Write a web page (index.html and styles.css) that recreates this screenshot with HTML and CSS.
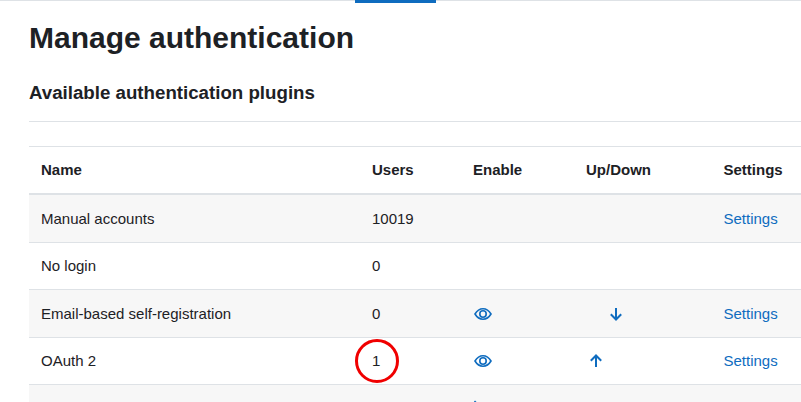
FILE: index.html
```html
<!DOCTYPE html>
<html lang="en">
<head>
<meta charset="utf-8">
<title>Manage authentication</title>
<link rel="stylesheet" href="styles.css">
</head>
<body>
<div class="tabbar"><span class="active-tab"></span></div>
<main class="page">
<h1>Manage authentication</h1>
<h3>Available authentication plugins</h3>
<hr class="rule">
<table class="plugins">
<thead>
<tr><th class="c-name">Name</th><th class="c-users">Users</th><th class="c-enable">Enable</th><th class="c-updown">Up/Down</th><th class="c-settings">Settings</th></tr>
</thead>
<tbody>
<tr class="odd"><td>Manual accounts</td><td>10019</td><td></td><td></td><td><a href="#">Settings</a></td></tr>
<tr><td>No login</td><td>0</td><td></td><td></td><td></td></tr>
<tr class="odd"><td>Email-based self-registration</td><td>0</td>
<td><svg class="icon eye" viewBox="0 0 18 14"><path d="M1 7C3 3.6 5.8 1.8 9 1.8S15 3.6 17 7c-2 3.4-4.8 5.200-8 5.200S3 10.400 1 7Z"/><circle cx="9" cy="7" r="3.200"/></svg></td>
<td><svg class="icon arrow down" viewBox="0 0 14 14"><path d="M7 1V12.500M1.800 7.300 7 12.500l5.200-5.200"/></svg></td>
<td><a href="#">Settings</a></td></tr>
<tr><td>OAuth 2</td><td><span class="ringed">1<span class="ring"></span></span></td>
<td><svg class="icon eye" viewBox="0 0 18 14"><path d="M1 7C3 3.6 5.8 1.8 9 1.8S15 3.6 17 7c-2 3.4-4.8 5.200-8 5.200S3 10.400 1 7Z"/><circle cx="9" cy="7" r="3.200"/></svg></td>
<td><svg class="icon arrow" viewBox="0 0 14 14"><path d="M7 13V1.500M1.800 6.700 7 1.500l5.200 5.200"/></svg></td>
<td><a href="#">Settings</a></td></tr>
<tr class="odd"><td>&nbsp;</td><td></td>
<td><svg class="icon eye-off" viewBox="0 0 18 18"><path d="M1 9c2-3.400 4.800-5.200 8-5.200S15 5.600 17 9c-2 3.400-4.800 5.200-8 5.200S3 12.400 1 9Z"/><path d="M1.500 1 16.500 17"/></svg></td>
<td></td><td></td></tr>
</tbody>
</table>
</main>
</body>
</html>
```
FILE: styles.css
```css
html, body { margin: 0; padding: 0; height: 402px; overflow: hidden; background: #fff; }
body { font-family: "Liberation Sans", Arial, sans-serif; font-size: 15px; color: #1d2125; }
.tabbar { height: 1px; background: #dee2e6; position: relative; }
.active-tab { position: absolute; left: 355px; top: 0; width: 81px; height: 3px; background: #0f6cbf; }
.page { height: 401px; overflow: hidden; padding: 0 0 0 29px; }
h1 { margin: 0; padding-top: 19px; font-size: 30px; line-height: 36px; font-weight: 700; }
h3 { margin: 0; padding-top: 26px; font-size: 18.7px; line-height: 22px; font-weight: 700; }
.rule { margin: 17px 0 0; border: 0; border-top: 1px solid #dee2e6; }
.plugins { margin-top: 24px; width: 772px; border-collapse: collapse; table-layout: fixed; }
.plugins th, .plugins td { padding: 12.500px 0 11.500px 12px; line-height: 22.500px; text-align: left; border-top: 1px solid #dee2e6; box-sizing: border-box; vertical-align: middle; }
.plugins th { padding: 12px 0 11.500px 12px; border-bottom: 2px solid #dee2e6; font-weight: 700; }
.c-name { width: 331px; }
.c-users { width: 101px; }
.c-enable { width: 113px; }
.c-updown { width: 137.500px; }
.odd td { background: #f7f7f7; }
a { color: #0f6cbf; text-decoration: none; }
.icon { display: block; fill: none; stroke: #0f6cbf; }
.eye { width: 18px; height: 14px; stroke-width: 1.600; margin-left: 0.500px; }
.eye-off { width: 18px; height: 18px; stroke-width: 1.600; }
.arrow { width: 14px; height: 14px; stroke-width: 2; }
.arrow { margin-left: 3px; }
.arrow.down { margin-left: 23px; }
.ringed { position: relative; display: inline-block; }
.ring { position: absolute; left: -17px; top: -11px; width: 38px; height: 38px; border: 3px solid #f00000; border-radius: 50%; }
```
